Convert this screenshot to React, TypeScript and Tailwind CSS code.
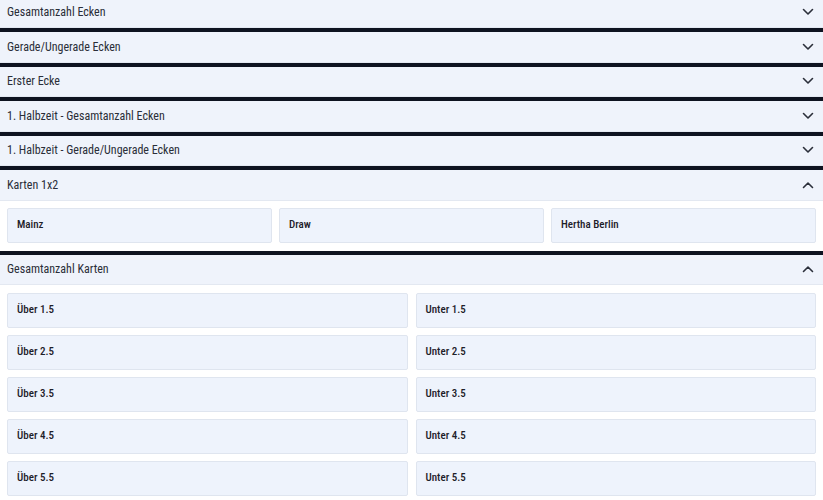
import React from 'react';

type Market = {
  title: string;
  open?: boolean;
  cols?: number;
  options?: string[];
};

const MARKETS: Market[] = [
  { title: 'Gesamtanzahl Ecken' },
  { title: 'Gerade/Ungerade Ecken' },
  { title: 'Erster Ecke' },
  { title: '1. Halbzeit - Gesamtanzahl Ecken' },
  { title: '1. Halbzeit - Gerade/Ungerade Ecken' },
  { title: 'Karten 1x2', open: true, cols: 3, options: ['Mainz', 'Draw', 'Hertha Berlin'] },
  {
    title: 'Gesamtanzahl Karten',
    open: true,
    cols: 2,
    options: [
      'Über 1.5', 'Unter 1.5',
      'Über 2.5', 'Unter 2.5',
      'Über 3.5', 'Unter 3.5',
      'Über 4.5', 'Unter 4.5',
      'Über 5.5', 'Unter 5.5',
    ],
  },
];

const Chevron: React.FC<{ up?: boolean }> = ({ up }) => (
  <svg width="12" height="8" viewBox="0 0 12 8" fill="none" className="text-[#2b2f3a]">
    <path
      d={up ? 'M1.5 6.5L6 2l4.5 4.5' : 'M1.5 1.5L6 6l4.5-4.5'}
      stroke="currentColor"
      strokeWidth="1.6"
      strokeLinecap="round"
      strokeLinejoin="round"
    />
  </svg>
);

const App: React.FC = () => {
  return (
    <div className="w-[823px] h-[500px] overflow-hidden bg-[#0e1320] font-['Roboto','Liberation_Sans',sans-serif] font-stretch-condensed">
      <div className="-mt-[2.5px] flex flex-col gap-[4px]">
        {MARKETS.map((m) => (
          <section key={m.title} className="bg-white">
            <div className="h-[30.5px] px-[7px] pr-[9px] flex items-center justify-between bg-[#eff3fb] border-b border-[#e3e8f1]">
              <span className="text-[12px] text-[#2a2e38]">{m.title}</span>
              <Chevron up={m.open} />
            </div>
            {m.open && m.options && (
              <div
                className={
                  m.cols === 3
                    ? 'grid grid-cols-3 gap-[7px] px-[7px] pt-[7px] pb-[8px] bg-white'
                    : 'grid grid-cols-2 gap-x-[8px] gap-y-[7px] px-[7px] pt-[8px] pb-[7px] bg-white'
                }
              >
                {m.options.map((o) => (
                  <button
                    key={o}
                    className="h-[35px] px-[9px] flex items-center text-left bg-[#eef3fc] border border-[#dfe5ef] rounded-[2px] text-[11px] font-medium text-[#1d2029]"
                  >
                    {o}
                  </button>
                ))}
              </div>
            )}
          </section>
        ))}
      </div>
    </div>
  );
};

export default App;
